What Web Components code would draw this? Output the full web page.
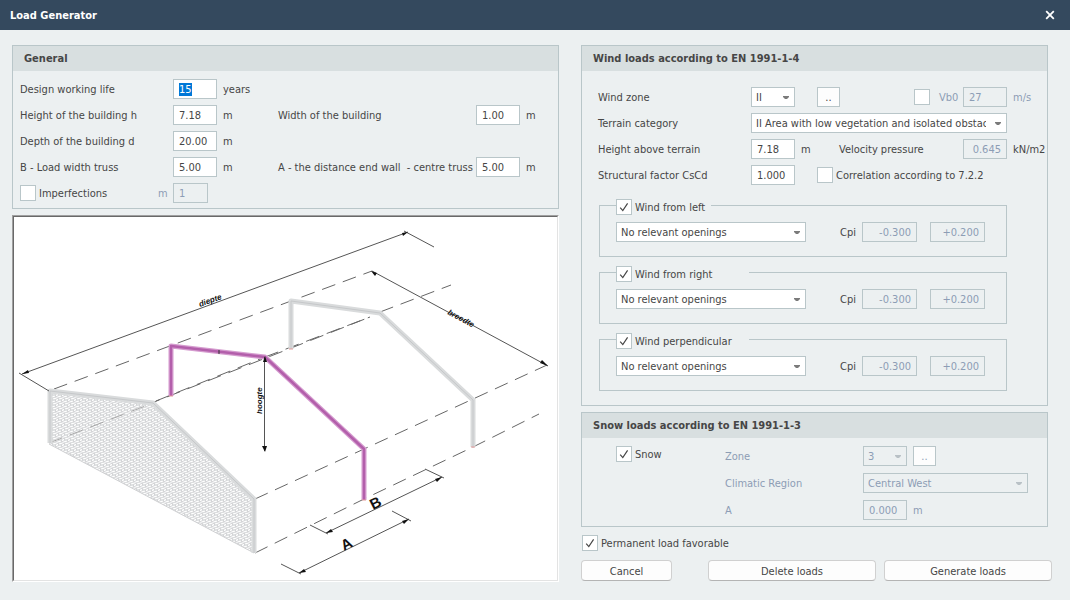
<!DOCTYPE html>
<html lang="en">
<head>
<meta charset="utf-8">
<meta name="viewport" content="width=device-width, initial-scale=1">
<title>Load Generator</title>
<style>
  html { height: 100%; }
  body {
    margin: 0;
    min-height: 100%;
    background: #ecf0f1;
    color: #464646;
    font: 11px/16px Tahoma, "DejaVu Sans Condensed", "Noto Sans", sans-serif;
    --line: #b9c6c9;
    --muted: #8c9db5;
  }
</style>
</head>
<body>
<load-generator></load-generator>

<script>
const SHARED = `
  *, *::before, *::after { box-sizing: border-box; }
  :host { box-sizing: border-box; }
  :host([hidden]) { display: none; }
  input, select, button { font: inherit; color: inherit; margin: 0; border-radius: 0; outline: none; }
`;

class LgElement extends HTMLElement {
  connectedCallback() {
    if (this.shadowRoot) return;
    this.attachShadow({ mode: 'open' });
    this.shadowRoot.innerHTML = `<style>${SHARED}${this.css()}</style>${this.html()}`;
    this.ready();
  }
  attr(name, fallback = '') { return this.getAttribute(name) ?? fallback; }
  flag(name) { return this.hasAttribute(name) ? name : ''; }
  ready() {}
}

/* Label, text box and unit in one line */
customElements.define('lg-field', class extends LgElement {
  css() { return `
    :host { display: flex; align-items: center; height: 20px; white-space: pre; }
    label { flex: none; width: var(--label, auto); padding-top: 2px; }
    input { flex: none; width: var(--box, 44px); height: 20px; padding: 0 5px; border: 1px solid var(--line); background: #fff; }
    input:disabled { background: transparent; color: var(--muted); opacity: 1; }
    input::selection { background: #0078d7; color: #fff; }
    .unit { flex: none; width: var(--unit, auto); padding: 2px 0 0 6px; }
    :host([numeric]) input { text-align: right; }
    :host([muted]) { color: var(--muted); }
  `; }
  html() { return `
    ${this.hasAttribute('label') ? `<label for="i">${this.attr('label')}</label>` : ''}
    <input id="i" type="text" value="${this.attr('value')}" ${this.flag('disabled')} aria-label="${this.attr('name', this.attr('label'))}">
    ${this.hasAttribute('unit') ? `<span class="unit">${this.attr('unit')}</span>` : ''}
  `; }
  ready() {
    if (this.hasAttribute('focused')) {
      const input = this.shadowRoot.querySelector('input');
      input.focus();
      input.select();
    }
  }
});

/* Label and drop-down */
customElements.define('lg-select', class extends LgElement {
  css() { return `
    :host { display: flex; align-items: center; height: 20px; }
    label { flex: none; width: var(--label, auto); padding-top: 2px; }
    .box { display: grid; flex: var(--grow, none); width: var(--box, 44px); min-width: 0; align-items: center; }
    select, svg { grid-area: 1 / 1; }
    select { appearance: none; width: 100%; min-width: 0; height: 20px; padding: 2px 20px 0 4px; border: 1px solid var(--line); background: #fff; }
    select:disabled { background: transparent; color: var(--muted); opacity: 1; }
    svg { justify-self: end; margin-right: 6px; width: 6px; height: 3px; fill: #7b7b7b; pointer-events: none; }
    select:disabled + svg { fill: #b9c1c6; }
  `; }
  html() { return `
    ${this.hasAttribute('label') ? `<label for="s">${this.attr('label')}</label>` : ''}
    <span class="box">
      <select id="s" ${this.flag('disabled')} aria-label="${this.attr('name', this.attr('label'))}"><option>${this.attr('value')}</option></select>
      <svg viewBox="0 0 6 3" aria-hidden="true"><path d="M0 0H6V1L4 3H2L0 1Z"/></svg>
    </span>
  `; }
});

customElements.define('lg-check', class extends LgElement {
  css() { return `
    :host { display: inline-flex; }
    label { display: flex; align-items: center; height: 16px; white-space: nowrap; }
    .box { display: grid; flex: none; }
    .text { padding: 2px 0 0 3px; }
    input, svg { grid-area: 1 / 1; width: 16px; height: 16px; }
    input { appearance: none; border: 1px solid var(--line); background: #fff; }
    svg { fill: none; stroke: #464646; stroke-width: 1.2; pointer-events: none; visibility: hidden; }
    input:checked + svg { visibility: visible; }
  `; }
  html() { return `
    <label><span class="box"><input type="checkbox" ${this.flag('checked')} ${this.hasAttribute('name') ? `aria-label="${this.attr('name')}"` : ''}>
      <svg viewBox="0 0 16 16" aria-hidden="true"><path d="M4.2 8.6L6.8 11.6L11.6 4.4"/></svg></span><span class="text"><slot></slot></span></label>
  `; }
});

customElements.define('lg-button', class extends LgElement {
  css() { return `
    :host { display: block; }
    button { display: block; width: 100%; height: 21px; padding: 2px 0 0; line-height: 16px; background: #fdfdfd; border: 1px solid #d0d0d0; border-bottom-color: #b4b4b4; border-radius: 4px; }
    :host([small]) { flex: none; width: 23px; }
    :host([small]) button { height: 20px; border: 1px solid var(--line); border-radius: 0; }
    button:disabled { color: var(--muted); }
  `; }
  html() { return `<button type="button" ${this.flag('disabled')}><slot></slot></button>`; }
});

customElements.define('lg-panel', class extends LgElement {
  css() { return `
    :host { display: block; border: 1px solid var(--line); }
    h2 { margin: 0; height: 25px; padding-left: 11px; background: #d8dfe0; font-size: 11px; line-height: 25px; }
  `; }
  html() { return `<h2>${this.attr('heading')}</h2><slot></slot>`; }
});

/* One wind direction: tick box in the frame, openings and both Cpi values */
customElements.define('lg-wind-case', class extends LgElement {
  css() { return `
    :host { display: block; }
    fieldset { margin: 0; min-width: 0; height: 58px; padding: 0 21px 0 16px; border: 1px solid var(--line); }
    legend { height: 13px; min-width: 95px; padding: 0; }
    :host([wide]) legend { min-width: 133px; }
    .row { display: flex; align-items: center; gap: 13px; padding-top: 10px; }
    lg-select { --box: 190px; }
    lg-field { --box: 55px; }
    .cpi { margin-left: auto; --label: 22px; }
  `; }
  html() { return `
    <fieldset>
      <legend><lg-check checked>${this.attr('heading')}</lg-check></legend>
      <div class="row">
        <lg-select name="Openings" value="No relevant openings"></lg-select>
        <lg-field class="cpi" label="Cpi" numeric value="-0.300" disabled></lg-field>
        <lg-field name="Cpi maximum" numeric value="+0.200" disabled></lg-field>
      </div>
    </fieldset>
  `; }
});

customElements.define('lg-titlebar', class extends LgElement {
  css() { return `
    :host { display: flex; align-items: center; justify-content: space-between; height: 30px; padding: 0 10px; background: #34495e; color: #fff; }
    h1 { margin: 0; padding-top: 2px; font-size: 11px; line-height: 16px; }
    button { display: grid; place-items: center; width: 20px; height: 20px; padding: 0; border: 0; background: none; }
    svg { width: 10px; height: 10px; stroke: #fff; stroke-width: 1.8; }
  `; }
  html() { return `
    <h1><slot></slot></h1>
    <button type="button" aria-label="Close"><svg viewBox="0 0 10 10" aria-hidden="true"><path d="M1.2 1.2L8.8 8.8M8.8 1.2L1.2 8.8"/></svg></button>
  `; }
});

/* Sketch of the hall with its dimensions */
customElements.define('lg-drawing', class extends LgElement {
  css() { return `
    :host { display: block; min-height: 200px; background: #fff; border: 1px solid; border-color: #a0a0a0 #fff #fff #a0a0a0; }
    .inner { height: 100%; border: 1px solid; border-color: #696969 #e3e3e3 #e3e3e3 #696969; }
    svg { display: block; width: 100%; height: 100%; fill: none; }
    .dash { stroke: #666; stroke-dasharray: 14 8; }
    .dim { stroke: #555; }
    .arrow { fill: #111; }
    .far, .mid { stroke-linejoin: round; }
    text { fill: #111; font-family: "Liberation Sans", sans-serif; }
    .name { font-size: 8px; font-style: italic; font-weight: bold; }
    .mark { font-size: 15px; font-weight: bold; }
  `; }
  html() { return `
    <div class="inner">
    <svg viewBox="14 217 543 363" role="img" aria-label="Hall dimensions">
      <defs>
        <pattern id="brick" width="6" height="5" patternUnits="userSpaceOnUse">
          <path d="M0 5L6 2.5M0 2.5L6 0M0 7.5L6 5M0 0L6 -2.5M1.5 0V2.5M4.5 2.5V5" stroke="#cbcdcf" stroke-width="0.9"/>
          <path d="M0 0L6 5" stroke="#dcddde" stroke-width="0.8"/>
        </pattern>
      </defs>

      <path fill="url(#brick)" d="M49 391L153 403L254 499V553L49 444Z"/>
      <path d="M49 444L254 553" stroke="#cfd0d2"/>
      <path d="M49 443L153 403" stroke="#999" stroke-dasharray="14 8" stroke-width="0.8"/>

      <g class="dash">
        <path d="M54 389L291 301L372 271"/>
        <path d="M156 401L265 357"/>
        <path d="M154 402L370 317" stroke-dashoffset="8"/>
        <path d="M265 357L370 317"/>
        <path d="M380 312L451 285"/>
        <path d="M255 499L364 449L473 399L547 365"/>
        <path d="M255 553L364 499L473 447L539 414"/>
      </g>

      <g class="far" stroke="#d9dbdc">
        <path stroke-width="5" d="M50 443V391L153 403L254 499V553"/>
        <path stroke-width="5" d="M291 349V301L380 313L473 400V447"/>
      </g>
      <g class="far" stroke="#c6c8ca">
        <path d="M50 443V391L153 403L254 499V553"/>
        <path d="M291 349V301L380 313L473 400V447"/>
      </g>
      <path class="mid" stroke="#d59ccf" stroke-width="5" d="M171 396V346L265 357L364 449V500"/>
      <path class="mid" stroke="#b35fab" stroke-width="2.4" d="M171 396V346L265 357L364 449V500"/>
      <path stroke="#333" d="M219 350V354"/>
      <path stroke="#e39a9a" d="M169 396H173M289 349H293M362 500H366M471 447H475"/>

      <g class="dim">
        <path d="M22 374L408 232"/>
        <path d="M19 373L49 391M404 231L434 247"/>
        <path d="M372 271L548 366"/>
        <path d="M264.5 357V451"/>
        <path d="M326 533L442 477M310 525L328 534M425 469L444 478"/>
        <path d="M299 573L409 519M281 564L301 574M392 511L411 521"/>
      </g>
      <g class="arrow">
        <path d="M22 374L28 370L29 373Z"/>
        <path d="M408 232L402 233L403 236Z"/>
        <path d="M371 271L377 273L375 276Z"/>
        <path d="M548 366L540 363L542 360Z"/>
        <path d="M265 356L263 362H267Z"/>
        <path d="M265 452L262 446H267Z"/>
        <path d="M326 533L331 529L333 532Z"/>
        <path d="M442 477L435 479L437 482Z"/>
        <path d="M299 573L304 569L306 572Z"/>
        <path d="M409 519L402 521L404 524Z"/>
      </g>

      <text class="name" transform="translate(200 307) rotate(-20)">diepte</text>
      <text class="name" transform="translate(447 314) rotate(28)">breedte</text>
      <text class="name" transform="translate(262 414) rotate(-90)">hoogte</text>
      <text class="mark" transform="translate(373 510) rotate(-27)">B</text>
      <text class="mark" transform="translate(344 551) rotate(-27)">A</text>
    </svg>
    </div>
  `; }
});

customElements.define('load-generator', class extends LgElement {
  css() { return `
    :host { display: block; }
    main { display: grid; grid-template-columns: 547fr 471fr; column-gap: 22px; padding: 15px 18px 18px 12px; }
    .left { display: grid; grid-template-rows: auto 1fr; row-gap: 6px; min-width: 0; }
    .right { min-width: 0; }
    .right lg-panel { margin-right: 4px; }

    .general { display: grid; grid-template-columns: 258fr 280fr; row-gap: 6px; padding: 8px 0 5px 7px; }
    .general lg-field { --label: 153px; }
    .general .second { --label: 198px; }
    .imperfections { display: flex; align-items: center; }
    .imperfections .count { --label: 15px; --box: 35px; }
    .imperfections lg-check { width: 138px; }

    .wind { display: grid; row-gap: 6px; padding: 16px 0 0 16px; }
    .line { display: flex; align-items: center; }
    .line > :first-child { --label: 153px; flex: none; width: 219px; }
    .line > .terrain { flex: 1; width: auto; margin-right: 40px; --grow: 1; }
    .line > .end { --label: 24px; --unit: 40px; }
    .line > .push { margin-left: auto; }
    .line > .velocity { margin-left: auto; --label: 124px; --unit: 40px; }
    .vb0 { margin-right: 6px; }
    .cases { display: grid; row-gap: 9px; padding: 14px 40px 14px 17px; }

    .snow-panel { margin-top: 6px; }
    .snow { display: grid; grid-template-columns: 109px 1fr; padding: 8px 19px 6px 34px; }
    .snow-fields { display: grid; row-gap: 7px; color: var(--muted); --label: 138px; }
    .snow-fields .line { gap: 6px; }
    .snow-fields .line > :first-child { --label: 138px; width: auto; }
    .region { --grow: 1; }

    .permanent { display: flex; margin: 8px 0 9px 1px; }
    .buttons { display: grid; grid-template-columns: 91fr 36fr 168fr 8fr 168fr; }
    .buttons > :nth-child(2) { grid-column: 3; }
    .buttons > :nth-child(3) { grid-column: 5; }
  `; }
  html() { return `
    <lg-titlebar>Load Generator</lg-titlebar>
    <main>
      <section class="left">
        <lg-panel heading="General">
          <div class="general">
            <lg-field label="Design working life" value="15" unit="years" focused></lg-field><span></span>
            <lg-field label="Height of the building h" value="7.18" unit="m"></lg-field>
            <lg-field class="second" label="Width of the building" value="1.00" unit="m"></lg-field>
            <lg-field label="Depth of the building d" value="20.00" unit="m"></lg-field><span></span>
            <lg-field label="B - Load width truss" value="5.00" unit="m"></lg-field>
            <lg-field class="second" label="A - the distance end wall  - centre truss" value="5.00" unit="m"></lg-field>
            <div class="imperfections">
              <lg-check>Imperfections</lg-check>
              <lg-field class="count" label="m" value="1" disabled muted></lg-field>
            </div>
          </div>
        </lg-panel>
        <lg-drawing></lg-drawing>
      </section>

      <section class="right">
        <lg-panel heading="Wind loads according to EN 1991-1-4">
          <div class="wind">
            <div class="line">
              <lg-select label="Wind zone" value="II"></lg-select>
              <lg-button small>..</lg-button>
              <lg-check class="push vb0" name="Set Vb0"></lg-check>
              <lg-field class="end" label="Vb0" value="27" unit="m/s" disabled muted></lg-field>
            </div>
            <div class="line">
              <lg-select class="terrain" label="Terrain category" value="II Area with low vegetation and isolated obstacles"></lg-select>
            </div>
            <div class="line">
              <lg-field label="Height above terrain" value="7.18" unit="m"></lg-field>
              <lg-field class="velocity" label="Velocity pressure" value="0.645" unit="kN/m2" numeric disabled></lg-field>
            </div>
            <div class="line">
              <lg-field label="Structural factor CsCd" value="1.000"></lg-field>
              <lg-check>Correlation according to 7.2.2</lg-check>
            </div>
          </div>
          <div class="cases">
            <lg-wind-case heading="Wind from left"></lg-wind-case>
            <lg-wind-case heading="Wind from right" wide></lg-wind-case>
            <lg-wind-case heading="Wind perpendicular" wide></lg-wind-case>
          </div>
        </lg-panel>

        <lg-panel class="snow-panel" heading="Snow loads according to EN 1991-1-3">
          <div class="snow">
            <lg-check checked>Snow</lg-check>
            <div class="snow-fields">
              <div class="line">
                <lg-select label="Zone" value="3" disabled></lg-select>
                <lg-button small disabled>..</lg-button>
              </div>
              <lg-select class="region" label="Climatic Region" value="Central West" disabled></lg-select>
              <lg-field label="A" value="0.000" unit="m" disabled muted></lg-field>
            </div>
          </div>
        </lg-panel>

        <div class="permanent"><lg-check checked>Permanent load favorable</lg-check></div>
        <div class="buttons">
          <lg-button>Cancel</lg-button>
          <lg-button>Delete loads</lg-button>
          <lg-button>Generate loads</lg-button>
        </div>
      </section>
    </main>
  `; }
});
</script>
</body>
</html>
